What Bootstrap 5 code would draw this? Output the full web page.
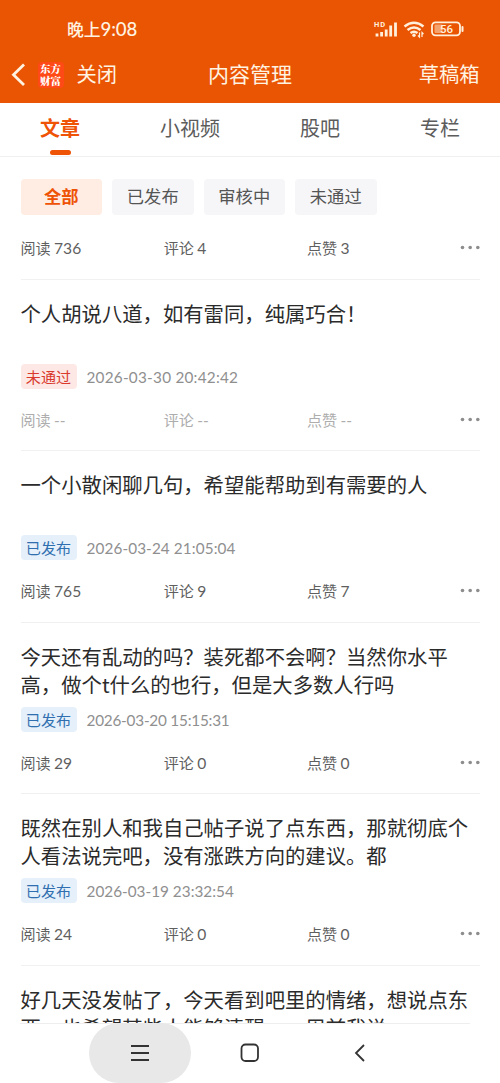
<!DOCTYPE html>
<html lang="zh-CN">
<head>
<meta charset="utf-8">
<meta name="viewport" content="width=device-width, initial-scale=1">
<title>内容管理</title>
<link href="https://cdn.jsdelivr.net/npm/bootstrap@5.3.0/dist/css/bootstrap.min.css" rel="stylesheet">
<style>
  body { font-family: "Noto Sans CJK SC", sans-serif; color: #2b2b2b; background: #fff; }
  .screen { height: 1083px; }
  .app-top { background: #ea5504; color: #fff3e2; height: 103px; flex: none; }
  .status { height: 46px; padding: 12px 35px 0 67px; font-size: 16.8px; line-height: 34px; font-weight: 500; }
  .clock-num { font-family: Lato, sans-serif; font-size: 18.6px; letter-spacing: -.1px; }
  .titlebar { height: 57px; padding: 0 20.5px 0 11px; font-size: 20.3px; line-height: 56px; }
  .titlebar > span { margin-top: -3px; }
  .app-logo { width: 26px; height: 26px; background: #ff4a17; border-radius: 4px; font: 900 10.5px/12px "Noto Serif CJK SC", "Noto Sans CJK SC", serif; color: #fff; padding-top: 1px; margin: 0 13px 0 12.5px; }
  .app-logo > div { height: 12px; }
  .tabs { height: 54px; flex: none; border-bottom: 1.5px solid #f0f0f0; font-size: 20px; line-height: 50px; color: #5c5c5c; }
  .tab-on { color: #ee5306; font-weight: 700; }
  .tab-on::after { content: ""; position: absolute; left: 50px; bottom: 1px; width: 21px; height: 5px; border-radius: 3px; background: #ee5306; }
  .filters { gap: 10px; padding: 22px 20.5px 0; }
  .chip { width: 81.5px; height: 36px; border-radius: 4px; background: #f6f6f8; color: #555; font-size: 17.3px; line-height: 34px; }
  .chip-on { background: #ffece2; color: #ee5306; font-weight: 700; }
  .feed { padding: 0 20px 0 20.5px; min-height: 0; }
  .post { height: 171.5px; border-top: 1.5px solid #f1f1f1; padding-top: 19px; flex: none; }
  .post-title { font-size: 20.35px; line-height: 28px; height: 65px; white-space: nowrap; }
  .state { width: 56px; height: 25px; border-radius: 4px; font-size: 15.1px; line-height: 24px; margin-right: 10px; }
  .state-ok { background: #e5f0fa; color: #2f6fb0; }
  .state-no { background: #fde8e6; color: #d93a2c; }
  .when { font-family: Lato, sans-serif; font-size: 15.3px; height: 25px; line-height: 27px; letter-spacing: .24px; color: #8f8f8f; }
  .stats { font-size: 15.1px; line-height: 24px; color: #5f5f5f; }
  .post .stats { margin-top: 18px; }
  .stats > span { width: 143.2px; }
  .stats b { font: 400 15.6px/20px Lato, sans-serif; }
  .stats.dim > span { color: #adadad; }
  .more { fill: #8d8d8d; }
  .first { height: 63.500px; padding-top: 20px; flex: none; }
  .sysnav { height: 60px; flex: none; background: #fff; padding-left: 89px; }
  .sysnav::before { content: ""; position: absolute; top: 0; left: 20px; right: 30px; height: 1px; background: #eee; }
  .pill { width: 102px; height: 60px; border-radius: 30px; background: #e8e8e8; z-index: 1; }
</style>
</head>
<body>
<div class="screen d-flex flex-column overflow-hidden">
  <header class="app-top">
    <div class="status d-flex justify-content-between">
      <span>晚上<span class="clock-num">9:08</span></span>
      <svg width="92" height="20" viewBox="0 0 92 20" style="margin-top:7px" fill="none" stroke="#fff0dc">
        <text x="1" y="8" font-family="Roboto" font-size="7.500" font-weight="700" fill="#fff0dc" stroke="none" textLength="11">HD</text>
        <path d="M4 14.500v3M8.600 13v4.500M13.200 10.500v7M17.700 6.500v11M22.500 3.500v14" stroke-width="2.800"/>
        <path d="M31.500 7.500q9.500-7.500 19 0M34.500 11q6.500-5 13 0M37.500 14q3.500-2.500 7 0" stroke-width="2.400"/>
        <circle cx="41" cy="16.300" r="1.700" fill="#fff0dc" stroke="none"/>
        <path d="M46.500 13.500v4.500l-1.500-1.500M49 18v-4.500l1.500 1.500" stroke-width="1.200"/>
        <rect x="59" y="3.300" width="28" height="13" rx="3.500" stroke-width="1.800"/>
        <rect x="61.500" y="5.500" width="8" height="8.500" rx="1" fill="#f5a36c" stroke="none"/>
        <path d="M89.500 8v4" stroke-width="2" stroke-linecap="round"/>
        <text x="67" y="14" font-family="Roboto" font-size="11.500" font-weight="500" fill="#fff0dc" stroke="none">56</text>
      </svg>
    </div>
    <div class="titlebar d-flex align-items-center position-relative">
      <svg width="14" height="24" viewBox="0 0 14 24" fill="none" stroke="#fff3e2" stroke-width="2.800"><path d="M13 1.500L2.500 11.800 13 22"/></svg>
      <div class="app-logo text-center"><div>东方</div><div>财富</div></div>
      <span>关闭</span>
      <span class="position-absolute start-50 translate-middle-x text-nowrap" style="font-size:21px">内容管理</span>
      <span class="ms-auto">草稿箱</span>
    </div>
  </header>
  <nav class="tabs d-flex text-center">
    <div class="tab-on position-relative" style="width:120px">文章</div>
    <div style="width:140px">小视频</div>
    <div style="width:120px">股吧</div>
    <div style="width:120px">专栏</div>
  </nav>
  <div class="filters d-flex text-center">
    <div class="chip chip-on">全部</div><div class="chip">已发布</div><div class="chip">审核中</div><div class="chip">未通过</div>
  </div>
  <main class="feed flex-grow-1 overflow-hidden d-flex flex-column">
    <div class="first"><div class="stats d-flex"><span>阅读 <b>736</b></span><span>评论 <b>4</b></span><span>点赞 <b>3</b></span><svg class="more ms-auto" width="20" height="24"><circle cx="2.500" cy="12.500" r="1.800"/><circle cx="10.200" cy="12.500" r="1.800"/><circle cx="17.800" cy="12.500" r="1.800"/></svg></div></div>
    <article class="post">
      <div class="post-title">个人胡说八道，如有雷同，纯属巧合！</div>
      <div class="d-flex"><span class="state state-no text-center">未通过</span><span class="when">2026-03-30 20:42:42</span></div>
      <div class="stats dim d-flex"><span>阅读 <b>--</b></span><span>评论 <b>--</b></span><span>点赞 <b>--</b></span><svg class="more ms-auto" width="20" height="24"><circle cx="2.500" cy="12.500" r="1.800"/><circle cx="10.200" cy="12.500" r="1.800"/><circle cx="17.800" cy="12.500" r="1.800"/></svg></div>
    </article>
    <article class="post">
      <div class="post-title">一个小散闲聊几句，希望能帮助到有需要的人</div>
      <div class="d-flex"><span class="state state-ok text-center">已发布</span><span class="when" style="letter-spacing:.1px">2026-03-24 21:05:04</span></div>
      <div class="stats d-flex"><span>阅读 <b>765</b></span><span>评论 <b>9</b></span><span>点赞 <b>7</b></span><svg class="more ms-auto" width="20" height="24"><circle cx="2.500" cy="12.500" r="1.800"/><circle cx="10.200" cy="12.500" r="1.800"/><circle cx="17.800" cy="12.500" r="1.800"/></svg></div>
    </article>
    <article class="post">
      <div class="post-title">今天还有乱动的吗？装死都不会啊？当然你水平<br>高，做个t什么的也行，但是大多数人行吗</div>
      <div class="d-flex"><span class="state state-ok text-center">已发布</span><span class="when" style="letter-spacing:-.22px">2026-03-20 15:15:31</span></div>
      <div class="stats d-flex"><span>阅读 <b>29</b></span><span>评论 <b>0</b></span><span>点赞 <b>0</b></span><svg class="more ms-auto" width="20" height="24"><circle cx="2.500" cy="12.500" r="1.800"/><circle cx="10.200" cy="12.500" r="1.800"/><circle cx="17.800" cy="12.500" r="1.800"/></svg></div>
    </article>
    <article class="post">
      <div class="post-title">既然在别人和我自己帖子说了点东西，那就彻底个<br>人看法说完吧，没有涨跌方向的建议。都</div>
      <div class="d-flex"><span class="state state-ok text-center">已发布</span><span class="when" style="letter-spacing:.01px">2026-03-19 23:32:54</span></div>
      <div class="stats d-flex"><span>阅读 <b>24</b></span><span>评论 <b>0</b></span><span>点赞 <b>0</b></span><svg class="more ms-auto" width="20" height="24"><circle cx="2.500" cy="12.500" r="1.800"/><circle cx="10.200" cy="12.500" r="1.800"/><circle cx="17.800" cy="12.500" r="1.800"/></svg></div>
    </article>
    <article class="post">
      <div class="post-title">好几天没发帖了，今天看到吧里的情绪，想说点东<br>西，也希望某些人能够清醒，一周前我说</div>
    </article>
  </main>
  <footer class="sysnav d-flex align-items-center position-relative">
    <div class="pill d-flex align-items-center justify-content-center">
      <svg width="18" height="18" stroke="#333" stroke-width="1.800"><path d="M0 2h18M0 9h18M0 16h18"/></svg>
    </div>
    <svg width="20" height="20" style="margin-left:49px" fill="none" stroke="#333" stroke-width="1.800"><rect x="1.500" y="1.500" width="16.500" height="16.500" rx="4"/></svg>
    <svg width="12" height="20" style="margin-left:94px" fill="none" stroke="#333" stroke-width="1.800"><path d="M10 2L2 10l8 8"/></svg>
  </footer>
</div>
<script src="https://cdn.jsdelivr.net/npm/bootstrap@5.3.0/dist/js/bootstrap.bundle.min.js"></script>
</body>
</html>
